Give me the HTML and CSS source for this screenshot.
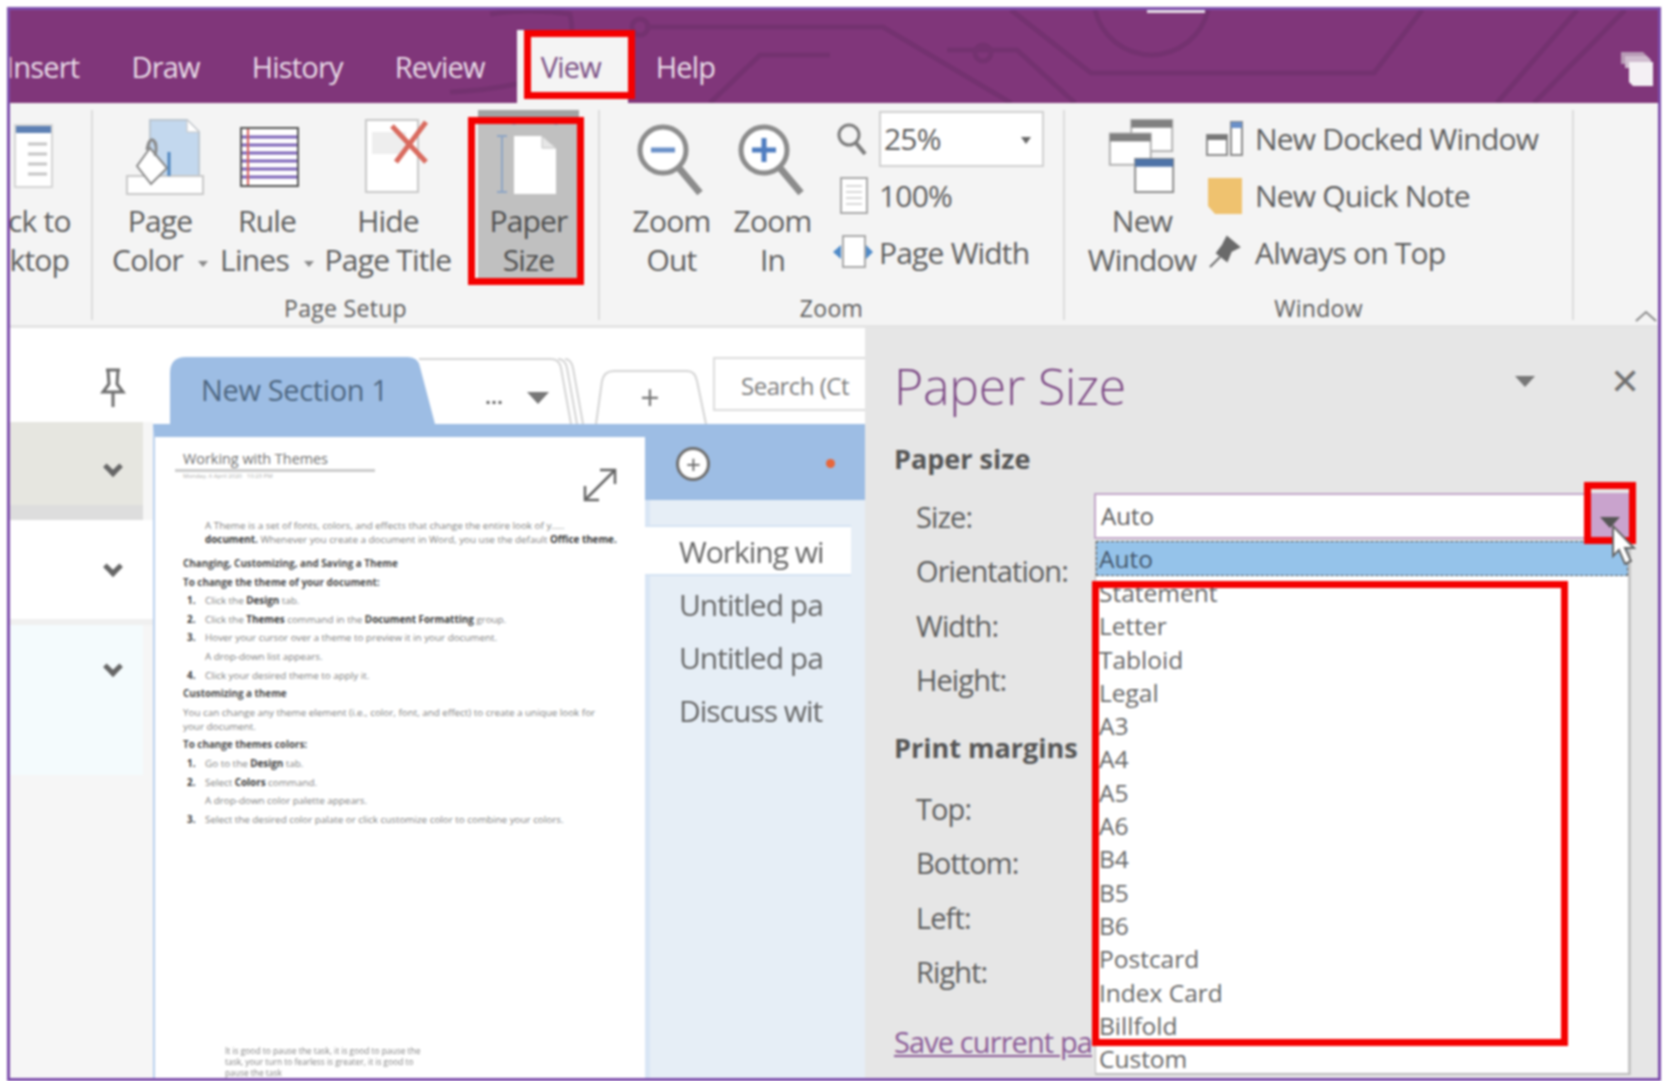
FILE: index.html
```html
<!DOCTYPE html>
<html>
  <head>
    <title>OneNote - Paper Size</title>
    <link rel="stylesheet" href="styles.css">
  </head>
  <body>
    <div class="frame">
      <!-- top purple bar with the tabs -->
      <div class="tabbar">
        <svg class="circuit" width="1648" height="93" viewBox="10 10 1648 93" fill="none" stroke="#743270" stroke-width="5">
          <path d="M1011 10 L1091 73 H1374 L1422 10"/>
          <path d="M1095 10 A58 58 0 0 0 1208 10"/>
          <path d="M645 27 H883 L1011 103"/>
          <path d="M947 50 H1017 L1075 103"/>
          <path d="M710 103 L760 55 H830"/>
          <path d="M1577 10 L1497 103"/>
          <path d="M1625 10 L1534 103"/>
          <path d="M490 14 Q530 8 570 14 Q580 60 540 78 Q500 90 450 92"/>
          <circle cx="640" cy="27" r="8"/>
          <circle cx="983" cy="53" r="8"/>
        </svg>
        <div class="top-mark"></div>
        <span class="tab tab-insert">Insert</span>
        <span class="tab">Draw</span>
        <span class="tab">History</span>
        <span class="tab">Review</span>
        <span class="tab tab-active">View</span>
        <span class="tab">Help</span>
        <svg class="pages-icon" width="36" height="38" viewBox="0 0 36 38">
          <path d="M2 2 H24 L28 6 V14 H2 Z" fill="#b89ab6"/>
          <path d="M6 6 H28 L32 10 V18 H6 Z" fill="#d0bccf"/>
          <path d="M10 12 H34 V36 H14 L10 32 Z" fill="#f4f0f4"/>
        </svg>
      </div>

      <!-- ribbon -->
      <div class="ribbon">
        <div class="group group-dock">
          <div class="group-body">
            <div class="big-btn btn-dock">
              <svg class="big-icon" width="40" height="68" viewBox="0 0 40 68">
                <rect x="1" y="3" width="37" height="62" fill="#fff" stroke="#d4d4d4" stroke-width="2"/>
                <rect x="2" y="4" width="35" height="7" fill="#5d80b4"/>
                <path d="M14 22 H33 M14 32 H33 M14 42 H33 M14 52 H33" stroke="#c4c4c4" stroke-width="3"/>
              </svg>
              <div class="btn-label">ck to<br>ktop</div>
            </div>
          </div>
        </div>

        <div class="group group-setup">
          <div class="group-body">
            <div class="big-btn btn-color">
              <svg class="big-icon" width="80" height="76" viewBox="0 0 80 76">
                <path d="M25 2 H62 L74 14 V60 H25 Z" fill="#c3d8ee" stroke="#bcc6d0" stroke-width="2"/>
                <path d="M62 2 V14 H74 Z" fill="#fff" stroke="#c4c4c4"/>
                <rect x="2" y="58" width="76" height="18" fill="#fff" stroke="#c8c8c8" stroke-width="2"/>
                <path d="M25 30 L42 50 L26 66 L12 48 Z" fill="#fff" stroke="#8a8a8a" stroke-width="2"/>
                <path d="M22 32 Q24 20 28 22 Q33 26 30 38" fill="none" stroke="#8a8a8a" stroke-width="3"/>
                <path d="M44 34 V58" stroke="#4f86bf" stroke-width="3"/>
              </svg>
              <div class="btn-label">Page<br>Color <i class="small-caret"></i></div>
            </div>
            <div class="big-btn btn-lines">
              <svg class="big-icon" width="60" height="76" viewBox="0 0 60 76">
                <rect x="1" y="10" width="57" height="58" fill="#fff" stroke="#555" stroke-width="2"/>
                <path d="M2 19 H57 M2 27 H57 M2 35 H57 M2 43 H57 M2 51 H57 M2 59 H57" stroke="#7d64b8" stroke-width="3"/>
                <path d="M8 11 V67" stroke="#d8605c" stroke-width="2"/>
              </svg>
              <div class="btn-label">Rule<br>Lines <i class="small-caret"></i></div>
            </div>
            <div class="big-btn btn-hide">
              <svg class="big-icon hide-icon" width="66" height="76" viewBox="0 0 66 76">
                <rect x="2" y="2" width="52" height="72" fill="#fff" stroke="#c8c8c8" stroke-width="2"/>
                <rect x="8" y="14" width="34" height="22" fill="#eeeeee"/>
                <path d="M28 8 L62 44 M62 4 L32 44" stroke="#d96a5e" stroke-width="5"/>
              </svg>
              <div class="btn-label">Hide<br>Page Title</div>
            </div>
            <div class="big-btn btn-paper">
              <svg class="big-icon" width="66" height="76" viewBox="0 0 66 76">
                <path d="M18 3 H60 M18 -1 V7 M60 -1 V7" stroke="#8ea5c4" stroke-width="3"/>
                <path d="M6 18 V74 M1 18 H11 M1 74 H11" stroke="#8ea5c4" stroke-width="2"/>
                <path d="M18 18 H46 L60 30 V76 H18 Z" fill="#fff"/>
                <path d="M46 18 V30 H60 Z" fill="#e6e6e6" stroke="#c4c4c4"/>
              </svg>
              <div class="btn-label">Paper<br>Size</div>
            </div>
          </div>
          <div class="group-label">Page Setup</div>
        </div>

        <div class="group group-zoom">
          <div class="group-body">
            <div class="big-btn btn-zoom">
              <svg class="big-icon" width="72" height="76" viewBox="0 0 72 76">
                <circle cx="27" cy="32" r="23" fill="#fff" stroke="#8c8c8c" stroke-width="5"/>
                <path d="M43 50 L64 75" stroke="#8c8c8c" stroke-width="7"/>
                <path d="M15 32 H39" stroke="#6a90c8" stroke-width="5"/>
              </svg>
              <div class="btn-label">Zoom<br>Out</div>
            </div>
            <div class="big-btn btn-zoom">
              <svg class="big-icon" width="72" height="76" viewBox="0 0 72 76">
                <circle cx="27" cy="32" r="23" fill="#fff" stroke="#8c8c8c" stroke-width="5"/>
                <path d="M43 50 L64 75" stroke="#8c8c8c" stroke-width="7"/>
                <path d="M15 32 H39 M27 20 V44" stroke="#4f7dc0" stroke-width="5"/>
              </svg>
              <div class="btn-label">Zoom<br>In</div>
            </div>
            <div class="small-col">
              <div class="small-row">
                <svg class="small-icon" width="46" height="40" viewBox="0 0 46 40">
                  <circle cx="18" cy="16" r="10" fill="none" stroke="#7c7c7c" stroke-width="3"/>
                  <path d="M25 24 L34 35" stroke="#7c7c7c" stroke-width="4"/>
                </svg>
                <div class="combo">25%<i class="combo-arrow"></i></div>
              </div>
              <div class="small-row">
                <svg class="small-icon" width="46" height="40" viewBox="0 0 46 40">
                  <rect x="10" y="2" width="26" height="35" fill="#fff" stroke="#a8a8a8" stroke-width="2"/>
                  <path d="M15 10 H31 M15 16 H31 M15 22 H31 M15 28 H31" stroke="#d8d8d8" stroke-width="2"/>
                </svg>
                <span>100%</span>
              </div>
              <div class="small-row">
                <svg class="small-icon" width="46" height="40" viewBox="0 0 46 40">
                  <rect x="12" y="3" width="22" height="31" fill="#fff" stroke="#a8a8a8" stroke-width="2"/>
                  <path d="M2 19 L10 12 V26 Z M42 19 L35 12 V26 Z" fill="#4f8ac8"/>
                </svg>
                <span>Page Width</span>
              </div>
            </div>
          </div>
          <div class="group-label">Zoom</div>
        </div>

        <div class="group group-window">
          <div class="group-body">
            <div class="big-btn btn-new-win">
              <svg class="big-icon" width="70" height="78" viewBox="0 0 70 78">
                <rect x="24" y="2" width="42" height="32" fill="#fff" stroke="#b0b0b0" stroke-width="2"/>
                <rect x="24" y="2" width="42" height="8" fill="#808080"/>
                <rect x="2" y="16" width="42" height="32" fill="#fff" stroke="#b0b0b0" stroke-width="2"/>
                <rect x="2" y="16" width="42" height="8" fill="#808080"/>
                <rect x="28" y="42" width="39" height="34" fill="#fff" stroke="#8a8a8a" stroke-width="2"/>
                <rect x="28" y="42" width="39" height="8" fill="#4f74a8"/>
              </svg>
              <div class="btn-label">New<br>Window</div>
            </div>
            <div class="small-col">
              <div class="small-row win-row">
                <svg class="small-icon" width="40" height="40" viewBox="0 0 40 40">
                  <rect x="2" y="16" width="20" height="20" fill="#fff" stroke="#8a8a8a" stroke-width="2"/>
                  <rect x="2" y="16" width="20" height="5" fill="#777"/>
                  <rect x="26" y="3" width="11" height="33" fill="#fff" stroke="#8a8a8a" stroke-width="2"/>
                  <rect x="26" y="3" width="11" height="6" fill="#6a90c8"/>
                </svg>
                <span>New Docked Window</span>
              </div>
              <div class="small-row win-row">
                <svg class="small-icon" width="40" height="40" viewBox="0 0 40 40">
                  <path d="M3 2 H37 V38 H10 L3 30 Z" fill="#efc26f"/>
                </svg>
                <span>New Quick Note</span>
              </div>
              <div class="small-row win-row">
                <svg class="small-icon" width="40" height="40" viewBox="0 0 40 40">
                  <path d="M22 4 L34 14 L26 18 L22 28 L12 20 L18 12 Z M15 24 L5 34" fill="#6a6a6a" stroke="#6a6a6a" stroke-width="2"/>
                </svg>
                <span>Always on Top</span>
              </div>
            </div>
          </div>
          <div class="group-label">Window</div>
        </div>

        <div class="group-end">
          <svg width="24" height="14" viewBox="0 0 24 14" fill="none" stroke="#8a8a8a" stroke-width="2"><path d="M2 12 L12 3 L22 12"/></svg>
        </div>
      </div>

      <!-- main area -->
      <div class="main">
        <div class="nav">
          <div class="nav-pin">
            <svg width="26" height="40" viewBox="0 0 26 40" fill="none" stroke="#707070" stroke-width="3">
              <path d="M6 2 H20 M8 2 L9 16 L3 24 H23 L17 16 L18 2 M13 24 V39"/>
            </svg>
          </div>
          <div class="nav-row nav-row-gray"><i class="chev"></i></div>
          <div class="nav-row nav-row-white"><i class="chev"></i></div>
          <div class="nav-row nav-row-cyan"><i class="chev"></i></div>
        </div>

        <div class="middle">
          <div class="section-tabs">
            <svg class="ghost-tabs" width="300" height="68" viewBox="0 0 300 68" fill="none" stroke="#d4d4d4" stroke-width="2">
              <path d="M0 3 H132 Q140 3 142 12 L152 68"/>
              <path d="M139 3 Q146 3 148 12 L158 68"/>
              <path d="M146 3 Q152 3 154 12 L164 68"/>
              <path d="M177 68 L183 25 Q185 15 195 15 H268 Q276 15 278 25 L287 68"/>
            </svg>
            <div class="section-active">New Section 1</div>
            <div class="section-more">... <i class="tri"></i></div>
            <div class="section-add">+</div>
            <div class="search-box">Search (Ct</div>
          </div>

          <div class="section-body">
            <div class="preview">
              <svg class="expand-icon" width="36" height="36" viewBox="0 0 36 36" fill="none" stroke="#666" stroke-width="2.5">
                <path d="M3 33 L33 3 M18 3 H33 V17 M3 19 V33 H17"/>
              </svg>
              <div class="thumb-title">Working with Themes</div>
              <div class="thumb-date">Monday, 6 April 2020 &nbsp; 10:23 PM</div>
              <p class="thumb-indent thumb-first">A Theme is a set of fonts, colors, and effects that change the entire look of y.....</p>
              <p class="thumb-indent thumb-tight"><b>document.</b> Whenever you create a document in Word, you use the default <b>Office theme.</b></p>
              <p class="thumb-head thumb-gap">Changing, Customizing, and Saving a Theme</p>
              <p class="thumb-head">To change the theme of your document:</p>
              <p class="thumb-step"><b>1.</b>Click the <b>Design</b> tab.</p>
              <p class="thumb-step"><b>2.</b>Click the <b>Themes</b> command in the <b>Document Formatting</b> group.</p>
              <p class="thumb-step"><b>3.</b>Hover your cursor over a theme to preview it in your document.</p>
              <p class="thumb-indent">A drop-down list appears.</p>
              <p class="thumb-step"><b>4.</b>Click your desired theme to apply it.</p>
              <p class="thumb-head">Customizing a theme</p>
              <p>You can change any theme element (i.e., color, font, and effect) to create a unique look for</p>
              <p class="thumb-tight">your document.</p>
              <p class="thumb-head">To change themes colors:</p>
              <p class="thumb-step"><b>1.</b>Go to the <b>Design</b> tab.</p>
              <p class="thumb-step"><b>2.</b>Select <b>Colors</b> command.</p>
              <p class="thumb-indent">A drop-down color palette appears.</p>
              <p class="thumb-step"><b>3.</b>Select the desired color palate or click customize color to combine your colors.</p>
              <div class="thumb-foot">It is good to pause the task, it is good to pause the<br>task, your turn to fearless is greater, it is good to<br>pause the task</div>
            </div>

            <div class="pages">
              <div class="pages-head">
                <span class="add-page">+</span>
                <i class="orange-dot"></i>
              </div>
              <div class="pages-gap"></div>
              <div class="page-item page-item-on">Working wi</div>
              <div class="page-item">Untitled pa</div>
              <div class="page-item">Untitled pa</div>
              <div class="page-item">Discuss wit</div>
            </div>
          </div>
        </div>

        <div class="pane">
          <div class="pane-head">
            <div class="pane-title">Paper Size</div>
            <i class="tri pane-tri"></i>
            <span class="pane-close">&#10005;</span>
          </div>
          <div class="pane-section">Paper size</div>
          <div class="pane-row">
            <label>Size:</label>
            <div class="size-input">Auto<span class="size-btn"><i class="tri size-tri"></i></span></div>
          </div>
          <div class="pane-row"><label>Orientation:</label></div>
          <div class="pane-row"><label>Width:</label></div>
          <div class="pane-row"><label>Height:</label></div>
          <div class="pane-section margins">Print margins</div>
          <div class="pane-row"><label>Top:</label></div>
          <div class="pane-row"><label>Bottom:</label></div>
          <div class="pane-row"><label>Left:</label></div>
          <div class="pane-row"><label>Right:</label></div>
          <div class="save-link">Save current pa</div>

          <div class="size-list">
            <div class="size-item size-item-on">Auto</div>
            <div class="size-item">Statement</div>
            <div class="size-item">Letter</div>
            <div class="size-item">Tabloid</div>
            <div class="size-item">Legal</div>
            <div class="size-item">A3</div>
            <div class="size-item">A4</div>
            <div class="size-item">A5</div>
            <div class="size-item">A6</div>
            <div class="size-item">B4</div>
            <div class="size-item">B5</div>
            <div class="size-item">B6</div>
            <div class="size-item">Postcard</div>
            <div class="size-item">Index Card</div>
            <div class="size-item">Billfold</div>
            <div class="size-item">Custom</div>
          </div>
        </div>
      </div>

      <!-- red note boxes and the mouse pointer -->
      <div class="note note-view"></div>
      <div class="note note-paper"></div>
      <div class="note note-btn"></div>
      <div class="note note-list"></div>
      <svg class="cursor" width="30" height="46" viewBox="0 0 30 46">
        <path d="M6 2 L6 32 L12 26 L18 40 L24 37 L18 24 L27 24 Z" fill="#fff" stroke="#666" stroke-width="2"/>
      </svg>
    </div>
  </body>
</html>
```

FILE: styles.css
```css
* {
  box-sizing: border-box;
}
body {
  margin: 0;
  background: #fff;
  font-family: "Open Sans", "Noto Sans", sans-serif;
  color: #5c5c5c;
}
.frame {
  position: relative;
  margin: 7px 0 0 7px;
  width: 1654px;
  height: 1074px;
  border: 3px solid #7c4dab;
  overflow: hidden;
  display: flex;
  flex-direction: column;
  filter: blur(1px);
}

/* tab bar */
.tabbar {
  position: relative;
  height: 93px;
  background: #80367a;
  display: flex;
  align-items: flex-start;
  flex-shrink: 0;
  padding-top: 20px;
}
.circuit {
  position: absolute;
  left: 0;
  top: 0;
}
.top-mark {
  position: absolute;
  left: 1137px;
  top: 0;
  width: 58px;
  height: 3px;
  background: #e6dce6;
}
.tab {
  position: relative;
  height: 73px;
  line-height: 73px;
  padding: 0 26px;
  font-size: 29px;
  letter-spacing: -0.8px;
  color: #eadfe9;
  white-space: nowrap;
}
.tab-insert {
  margin-left: -30px;
}
.tab-active {
  width: 111px;
  margin-left: 6px;
  padding: 0 0 0 24px;
  background: #f4f4f4;
  color: #7a4f84;
}
.tab-active + .tab {
  padding-left: 28px;
}
.pages-icon {
  position: absolute;
  right: 3px;
  top: 40px;
}

/* ribbon */
.ribbon {
  height: 225px;
  flex-shrink: 0;
  background: #f4f4f4;
  border-bottom: 3px solid #e4e4e4;
  display: flex;
  padding-top: 7px;
  font-size: 30px;
  letter-spacing: -0.8px;
}
.group {
  display: flex;
  flex-direction: column;
  height: 210px;
  border-right: 2px solid #dcdcdc;
}
.group-dock {
  width: 83px;
}
.group-setup {
  width: 507px;
}
.group-zoom {
  width: 465px;
}
.group-window {
  width: 509px;
}
.group-end {
  flex: 1;
  display: flex;
  align-items: flex-end;
  justify-content: flex-end;
  padding-bottom: 2px;
}
.group-body {
  height: 186px;
  display: flex;
}
.group-label {
  height: 24px;
  line-height: 24px;
  font-size: 23px;
  letter-spacing: 0.3px;
  text-align: center;
}
.group-setup .group-body {
  padding-left: 25px;
}
.group-zoom .group-body {
  padding-left: 21px;
}
.group-window .group-body {
  padding-left: 22px;
}
.big-btn {
  height: 168px;
  padding-top: 8px;
  display: flex;
  flex-direction: column;
  align-items: center;
  text-align: center;
  white-space: nowrap;
}
.big-icon {
  height: 76px;
  margin-bottom: 7px;
  flex-shrink: 0;
  overflow: visible;
}
.hide-icon {
  margin-left: 18px;
}
.btn-label {
  line-height: 39px;
}
.btn-dock {
  align-items: flex-start;
  padding-left: 4px;
  width: 83px;
}
.btn-dock .btn-label {
  margin-left: -6px;
}
.btn-color {
  width: 94px;
  margin-right: 4px;
}
.btn-color .btn-label {
  margin-left: -10px;
}
.btn-lines {
  width: 108px;
}
.btn-lines .btn-label {
  margin-left: -6px;
}
.btn-hide {
  width: 128px;
  margin-right: 26px;
}
.btn-paper {
  width: 101px;
  background: #c0c0c0;
  border-top: 7px solid #a2a2a2;
  padding-top: 1px;
  color: #4e4e4e;
}
.btn-zoom {
  width: 101px;
}
.btn-new-win {
  width: 110px;
}
.small-caret {
  display: inline-block;
  width: 0;
  height: 0;
  margin: 0 0 4px 8px;
  border-left: 5px solid transparent;
  border-right: 5px solid transparent;
  border-top: 6px solid #8a8a8a;
}
.small-col {
  display: flex;
  flex-direction: column;
  margin-left: 8px;
}
.small-row {
  height: 57px;
  display: flex;
  align-items: center;
  gap: 2px;
  white-space: nowrap;
}
.small-icon {
  flex-shrink: 0;
}
.combo {
  position: relative;
  width: 165px;
  height: 56px;
  line-height: 52px;
  padding-left: 3px;
  background: #fff;
  border: 2px solid #d0d0d0;
}
.combo-arrow {
  position: absolute;
  right: 11px;
  top: 24px;
  border-left: 5px solid transparent;
  border-right: 5px solid transparent;
  border-top: 7px solid #666;
}
.win-row {
  gap: 10px;
}

/* main */
.main {
  flex: 1;
  display: flex;
  min-height: 0;
}
.nav {
  width: 143px;
  flex-shrink: 0;
  background: #f6f6f6;
  display: flex;
  flex-direction: column;
}
.nav-pin {
  height: 94px;
  background: #fff;
  display: flex;
  justify-content: center;
  align-items: flex-start;
  padding: 40px 0 0 62px;
}
.nav-row {
  display: flex;
  justify-content: center;
  padding-left: 72px;
  margin-right: 10px;
}
.nav-row-gray {
  height: 98px;
  padding-top: 38px;
  background: linear-gradient(#e6e6e0 83px, #dddddd 83px);
}
.nav-row-white {
  height: 105px;
  padding-top: 40px;
  padding-right: 10px;
  margin-right: 0;
  background: #fff;
  border-bottom: 6px solid #f0f0f0;
}
.nav-row-cyan {
  height: 150px;
  padding-top: 35px;
  background: #f4fbfd;
}
.chev {
  display: block;
  width: 14px;
  height: 14px;
  border-right: 5px solid #666;
  border-bottom: 5px solid #666;
  transform: rotate(45deg);
}

.middle {
  width: 712px;
  flex-shrink: 0;
  display: flex;
  flex-direction: column;
  min-height: 0;
}
.section-tabs {
  position: relative;
  height: 96px;
  flex-shrink: 0;
  background: #fff;
  display: flex;
  align-items: flex-end;
  padding-left: 17px;
}
.ghost-tabs {
  position: absolute;
  left: 266px;
  bottom: 0;
}
.section-active {
  width: 265px;
  height: 67px;
  line-height: 65px;
  padding-left: 31px;
  background: #9dbde4;
  clip-path: path("M0 67 V16 Q0 0 16 0 H238 Q248 0 250 10 L265 67 Z");
  font-size: 29px;
  letter-spacing: -0.35px;
  color: #4d6680;
  white-space: nowrap;
}
.section-more {
  position: relative;
  width: 146px;
  height: 67px;
  line-height: 76px;
  padding-left: 50px;
  font-size: 22px;
  font-weight: 600;
}
.section-more .tri {
  margin-left: 18px;
  border-left-width: 11px;
  border-right-width: 11px;
  border-top-width: 12px;
}
.section-add {
  position: relative;
  width: 132px;
  height: 67px;
  line-height: 80px;
  padding-left: 6px;
  text-align: center;
  font-size: 34px;
  color: #777;
}
.search-box {
  align-self: flex-start;
  margin-top: 29px;
  width: 152px;
  height: 54px;
  line-height: 54px;
  padding-left: 26px;
  background: #fff;
  border: 2px solid #dcdcdc;
  border-right: 0;
  font-size: 24px;
  letter-spacing: -0.5px;
  color: #7c7c7c;
  white-space: nowrap;
}
.tri {
  display: inline-block;
  width: 0;
  height: 0;
  border-left: 10px solid transparent;
  border-right: 10px solid transparent;
  border-top: 11px solid #777;
}
.section-body {
  flex: 1;
  min-height: 0;
  display: flex;
}

/* page preview */
.preview {
  position: relative;
  width: 492px;
  flex-shrink: 0;
  background: #fff;
  border-top: 13px solid #9dbde4;
  border-left: 2px solid #b9d0ee;
  padding: 14px 10px 0 28px;
  font-size: 9.85px;
  line-height: 13px;
  color: #808080;
}
.preview p {
  margin: 0;
  padding-top: 5.6px;
  white-space: nowrap;
}
.preview b {
  color: #3c3c3c;
}
.preview .thumb-tight {
  padding-top: 1px;
}
.thumb-title {
  width: 200px;
  margin-left: -8px;
  padding: 0 0 2px 8px;
  border-bottom: 3px solid #cccccc;
  font-size: 14.4px;
  line-height: 16px;
  color: #707070;
}
.thumb-date {
  font-size: 6px;
  line-height: 8px;
  color: #aaa;
}
.preview .thumb-indent {
  padding-left: 22px;
}
.preview .thumb-first {
  padding-top: 39px;
}
.preview .thumb-head {
  font-weight: 700;
  color: #4c4c4c;
}
.preview .thumb-gap {
  padding-top: 11px;
}
.preview .thumb-step b:first-child {
  display: inline-block;
  width: 22px;
  padding-left: 4px;
}
.expand-icon {
  position: absolute;
  left: 427px;
  top: 30px;
}
.thumb-foot {
  position: absolute;
  left: 70px;
  bottom: 0;
  font-size: 8.4px;
  line-height: 11px;
  white-space: nowrap;
}

/* page list */
.pages {
  flex: 1;
  background: linear-gradient(to right, #d9e6f5 5px, #e6eef6 5px);
  font-size: 30px;
  letter-spacing: -1px;
  overflow: hidden;
}
.pages-head {
  position: relative;
  height: 76px;
  background: #9dbde4;
}
.add-page {
  position: absolute;
  left: 31px;
  top: 23px;
  width: 34px;
  height: 34px;
  line-height: 28px;
  text-align: center;
  border-radius: 50%;
  background: #fff;
  border: 3px solid #6f6f6f;
  font-size: 26px;
  color: #666;
}
.orange-dot {
  position: absolute;
  left: 181px;
  top: 35px;
  width: 9px;
  height: 9px;
  border-radius: 50%;
  background: #e8663a;
}
.pages-gap {
  height: 25px;
}
.page-item {
  height: 53px;
  line-height: 53px;
  padding-left: 34px;
  white-space: nowrap;
  color: #666;
}
.page-item-on {
  height: 51px;
  line-height: 50px;
  margin-right: 14px;
  margin-bottom: 2px;
  background: #fff;
  border-top: 2px solid #d5e3f3;
  border-bottom: 2px solid #d5e3f3;
}

/* right pane */
.pane {
  position: relative;
  flex: 1;
  background: #e6e6e6;
  padding: 28px 0 0 29px;
  font-size: 29px;
  letter-spacing: -0.9px;
}
.pane-head {
  position: relative;
  height: 60px;
}
.pane-title {
  font-size: 50px;
  font-weight: 300;
  line-height: 60px;
  letter-spacing: -0.25px;
  color: #7d4a85;
}
.pane-tri {
  position: absolute;
  left: 621px;
  top: 20px;
}
.pane-close {
  position: absolute;
  left: 716px;
  top: 5px;
  font-size: 36px;
  line-height: 40px;
  color: #707070;
}
.pane-section {
  margin-top: 25px;
  height: 36px;
  line-height: 36px;
  font-size: 27px;
  letter-spacing: 0;
  font-weight: 700;
  color: #555;
}
.margins {
  margin-top: 23px;
}
.pane-section + .pane-row {
  margin-top: 12px;
}
.margins + .pane-row {
  margin-top: 15px;
}
.pane-row {
  height: 54.5px;
  padding-left: 22px;
  display: flex;
  align-items: center;
}
.pane-row label {
  width: 178px;
  flex-shrink: 0;
}
.size-input {
  position: relative;
  width: 536px;
  height: 46px;
  line-height: 42px;
  padding-left: 5px;
  background: #fff;
  border: 2px solid #c2a6c8;
  font-size: 24px;
  letter-spacing: 0;
}
.size-btn {
  position: absolute;
  right: -1px;
  top: -2px;
  width: 38px;
  height: 46px;
  background: #c9a3cd;
  text-align: center;
}
.size-tri {
  margin-top: 24px;
  display: block;
  margin-left: 9px;
  border-top-color: #555;
}
.save-link {
  margin-top: 25px;
  height: 36px;
  line-height: 36px;
  color: #8a5a96;
  text-decoration: underline;
  white-space: nowrap;
}

/* open drop down, lies over the form */
.size-list {
  position: absolute;
  left: 230px;
  top: 213px;
  bottom: 3px;
  width: 536px;
  background: #fff;
  border-right: 3px solid #c4c4c4;
  border-left: 1px solid #bbb;
  border-bottom: 2px solid #bbb;
  font-size: 24.5px;
  letter-spacing: 0;
  overflow: hidden;
}
.size-item {
  height: 33.3px;
  line-height: 33px;
  padding-left: 3px;
  color: #666;
}
.size-item-on {
  height: 35px;
  line-height: 33px;
  background: #95c3ea;
  border: 1px dashed #555;
  padding-left: 2px;
  color: #44566a;
}

/* annotations over the screenshot */
.note {
  position: absolute;
  border: 7px solid #f40000;
}
.note-view {
  left: 514px;
  top: 20px;
  width: 111px;
  height: 69px;
}
.note-paper {
  left: 458px;
  top: 107px;
  width: 116px;
  height: 168px;
}
.note-btn {
  left: 1574px;
  top: 472px;
  width: 52px;
  height: 62px;
}
.note-list {
  left: 1082px;
  top: 571px;
  width: 476px;
  height: 465px;
}
.cursor {
  position: absolute;
  left: 1597px;
  top: 514px;
}
```
